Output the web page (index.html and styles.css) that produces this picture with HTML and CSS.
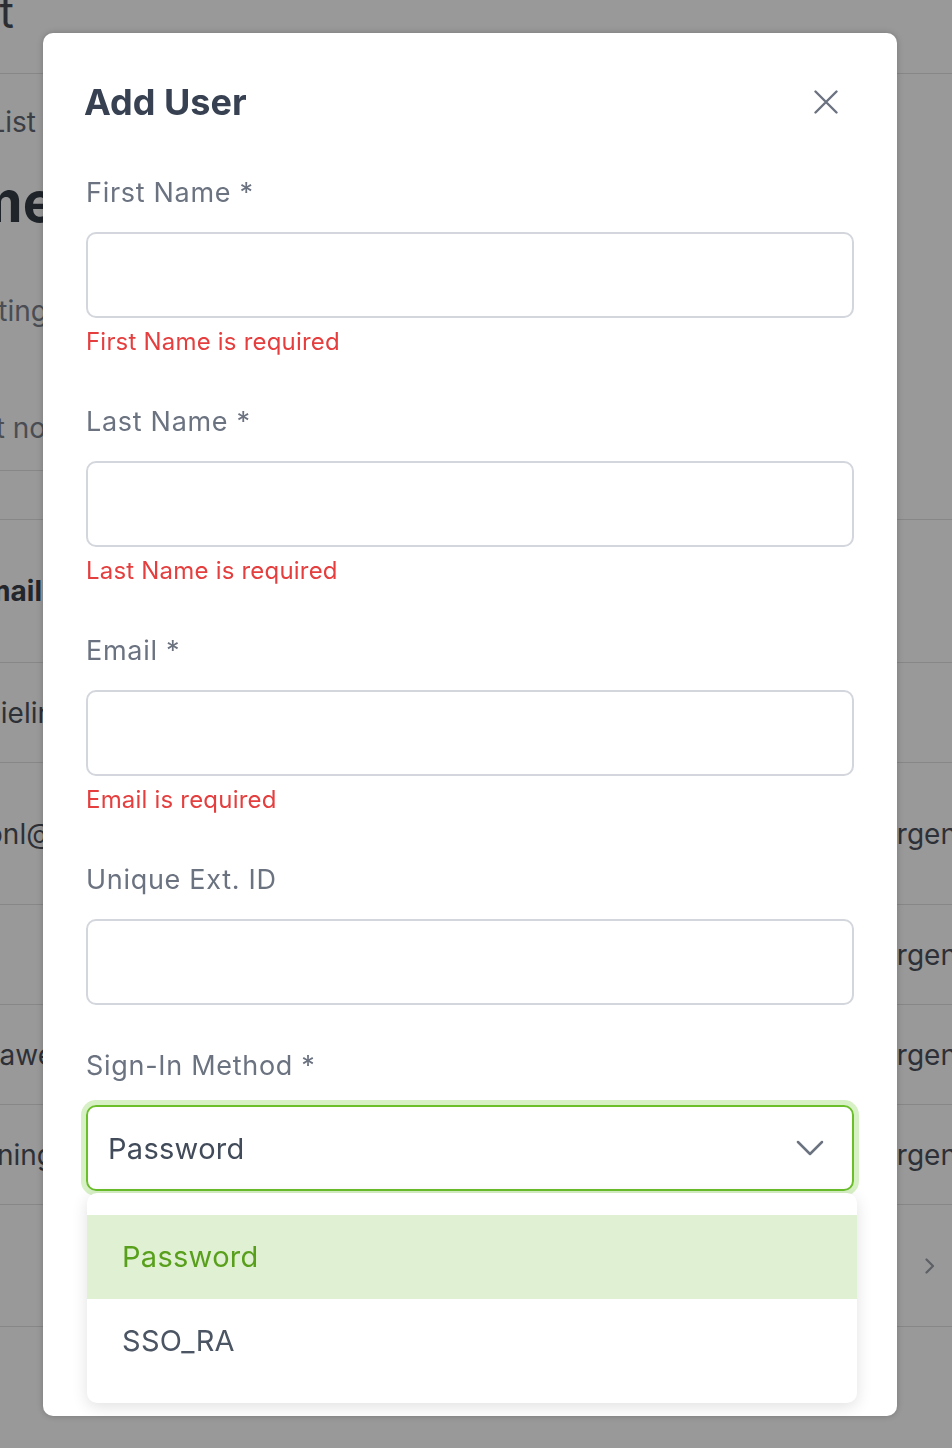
FILE: index.html
```html
<!DOCTYPE html>
<html lang="en">
<head>
<meta charset="utf-8">
<title>Add User</title>
<link rel="stylesheet" href="styles.css">
</head>
<body>
<div class="page">
  <div class="row r-top">
    <div class="lc"><span class="bg-title">Management</span></div>
    <div class="rc"></div>
  </div>
  <div class="row r-intro">
    <div class="lc col">
      <div class="cell-line"><span class="crumb">User List</span></div>
      <div class="cell-line big-line"><span class="bg-heading">Username</span></div>
      <div class="cell-line ting-line"><span class="muted">Listing</span></div>
    </div>
    <div class="rc"></div>
  </div>
  <div class="row r-search">
    <div class="lc bordered"><span class="muted">Last no</span></div>
    <div class="rc"></div>
  </div>
  <div class="row r-gap line">
    <div class="lc"></div>
    <div class="rc"></div>
  </div>
  <div class="row r-head line">
    <div class="lc"><span class="th">Email</span></div>
    <div class="rc"></div>
  </div>
  <div class="row r-100 line">
    <div class="lc"><span class="td">danielin</span></div>
    <div class="rc"></div>
  </div>
  <div class="row r-142 line">
    <div class="lc"><span class="td">jonl@i</span></div>
    <div class="rc"><span class="td">Urgent</span></div>
  </div>
  <div class="row r-100 line">
    <div class="lc"></div>
    <div class="rc"><span class="td">Urgent</span></div>
  </div>
  <div class="row r-100 line">
    <div class="lc"><span class="td">dawe</span></div>
    <div class="rc"><span class="td">Urgent</span></div>
  </div>
  <div class="row r-100 line">
    <div class="lc"><span class="td">tuning</span></div>
    <div class="rc"><span class="td">Urgent</span></div>
  </div>
  <div class="row r-pager line">
    <div class="lc"></div>
    <div class="rc">
      <svg class="pager-next" width="12" height="18" viewBox="0 0 12 18"><path d="M2.5 2.5L9 9L2.5 15.5" fill="none" stroke="#5d6066" stroke-width="2.2" stroke-linecap="round" stroke-linejoin="round"/></svg>
    </div>
  </div>
</div>

<div class="modal" role="dialog" aria-label="Add User">
  <div class="modal-header">
    <h2 class="modal-title">Add User</h2>
    <button class="close-btn" aria-label="Close">
      <svg width="24" height="24" viewBox="0 0 24 24"><path d="M1.5 1.5L22.5 22.5M22.5 1.5L1.5 22.5" fill="none" stroke="#6b7280" stroke-width="2.4" stroke-linecap="round"/></svg>
    </button>
  </div>
  <div class="form">
    <div class="field">
      <label class="label">First Name *</label>
      <div class="input"></div>
      <div class="error">First Name is required</div>
    </div>
    <div class="field">
      <label class="label">Last Name *</label>
      <div class="input"></div>
      <div class="error">Last Name is required</div>
    </div>
    <div class="field">
      <label class="label">Email *</label>
      <div class="input"></div>
      <div class="error">Email is required</div>
    </div>
    <div class="field">
      <label class="label">Unique Ext. ID</label>
      <div class="input"></div>
    </div>
    <div class="field">
      <label class="label">Sign-In Method *</label>
      <div class="select-wrap">
        <div class="select">
          <span class="select-value">Password</span>
          <svg width="28" height="18" viewBox="0 0 28 18"><path d="M2 3L14 15L26 3" fill="none" stroke="#6b7280" stroke-width="2.5" stroke-linecap="round" stroke-linejoin="round"/></svg>
        </div>
        <ul class="menu">
          <li class="option selected">Password</li>
          <li class="option">SSO_RA</li>
        </ul>
      </div>
    </div>
  </div>
</div>
</body>
</html>
```
FILE: styles.css
```css
* { box-sizing: border-box; }
html, body { margin: 0; padding: 0; }
body {
  width: 952px;
  height: 1448px;
  overflow: hidden;
  background: #999999;
  font-family: "Inter", "Noto Sans", sans-serif;
  color: #2d3036;
}

/* ---------- backdrop page ---------- */
.page { display: flex; flex-direction: column; }
.row {
  display: grid;
  grid-template-columns: 60px 1fr 76px;
}
.row.line { border-bottom: 1px solid #878787; }
.lc, .rc {
  display: flex;
  align-items: center;
  overflow: hidden;
  white-space: nowrap;
}
.lc { grid-column: 1; justify-content: flex-end; }
.rc { grid-column: 3; justify-content: flex-start; }

.r-top { height: 74px; border-bottom: 1px solid #878787; }
.r-top .lc { align-items: flex-start; padding-right: 46px; }
.bg-title { font-size: 44px; line-height: 44px; margin-top: -10px; color: #2b2e33; }

.r-intro { height: 311px; }
.lc.col { flex-direction: column; align-items: stretch; justify-content: flex-start; }
.cell-line { display: flex; justify-content: flex-end; white-space: nowrap; }
.cell-line:first-child { margin-top: 28px; height: 40px; align-items: center; padding-right: 24px; }
.crumb { font-size: 28px; color: #3b3e44; }
.big-line { margin-top: 28px; height: 64px; align-items: center; padding-right: 4px; }
.bg-heading { font-size: 56px; font-weight: 700; color: #1f232a; }
.ting-line { margin-top: 57px; height: 40px; align-items: center; padding-right: 12px; }
.muted { font-size: 28px; color: #4a4d53; }

.r-search { height: 86px; }
.lc.bordered { border-bottom: 1px solid #878787; padding-right: 14px; }
.r-gap { height: 49px; }
.r-head { height: 143px; }
.r-head .lc { padding-right: 18px; }
.th { font-size: 28px; font-weight: 700; color: #23262c; }
.r-100 { height: 100px; }
.r-142 { height: 142px; }
.td { font-size: 28px; color: #2d3036; }
.r-100 .lc { padding-right: 6px; }
.r-142 .lc { padding-right: 0; }
.r-pager { height: 122px; }
.pager-next { margin-left: 48px; }

/* ---------- modal ---------- */
.modal {
  position: fixed;
  top: 33px;
  left: 43px;
  width: 854px;
  height: 1383px;
  background: #ffffff;
  border-radius: 10px;
  box-shadow: 0 0 6px rgba(0, 0, 0, 0.22);
  padding: 45px 43px 0;
}
.modal-header {
  display: flex;
  align-items: center;
  justify-content: space-between;
  height: 48px;
}
.modal-title {
  margin: 0 0 0 -2px;
  font-size: 36px;
  line-height: 48px;
  font-weight: 700;
  color: #374151;
}
.close-btn {
  border: 0;
  background: none;
  padding: 0;
  width: 24px;
  height: 24px;
  margin-right: 16px;
  display: flex;
}

.form { margin-top: 47px; display: flex; flex-direction: column; }
.field { margin-bottom: 41px; display: flex; flex-direction: column; }
.label {
  font-size: 27px;
  line-height: 40px;
  letter-spacing: 0.7px;
  color: #6b7280;
  margin-bottom: 19px;
}
.input {
  height: 86px;
  border: 2px solid #d3d6dc;
  border-radius: 10px;
  background: #fff;
}
.error {
  margin-top: 5px;
  font-size: 24px;
  line-height: 38px;
  letter-spacing: 0.2px;
  color: #e53e3e;
}

.select-wrap { position: relative; }
.select {
  height: 86px;
  border: 2px solid #6abf2b;
  border-radius: 10px;
  box-shadow: 0 0 0 5px #d7f0c5;
  display: flex;
  align-items: center;
  justify-content: space-between;
  padding: 0 28px 0 20px;
}
.select-value { font-size: 29px; letter-spacing: 0.3px; color: #414b5a; }

.menu {
  position: absolute;
  top: 88px;
  left: 1px;
  width: 770px;
  margin: 0;
  padding: 22px 0 20px;
  list-style: none;
  background: #fff;
  border-radius: 10px;
  box-shadow: 0 4px 16px rgba(0, 0, 0, 0.12);
}
.option {
  height: 84px;
  line-height: 84px;
  padding-left: 35px;
  font-size: 29px;
  letter-spacing: 0.3px;
  color: #4b5563;
}
.option.selected { background: #e0f0d2; color: #58a01c; }
```
